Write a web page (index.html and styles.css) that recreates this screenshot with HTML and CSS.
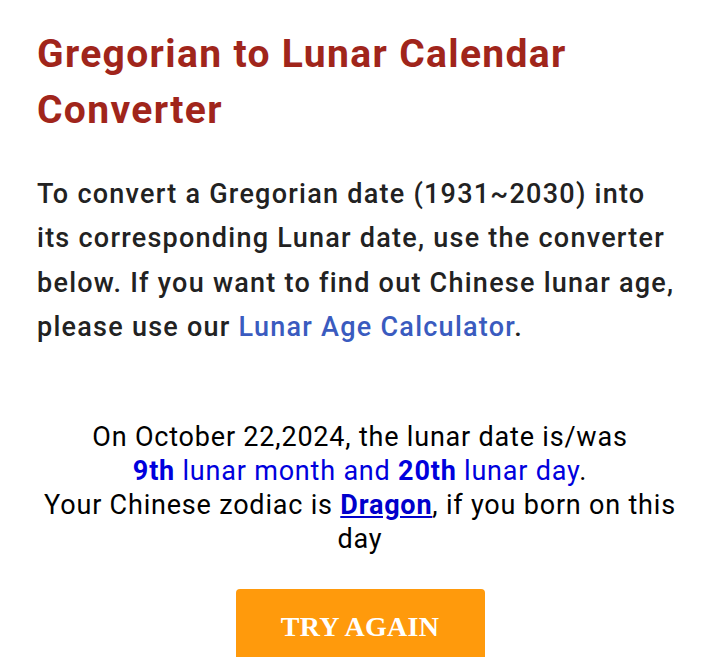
FILE: index.html
```html
<html>
<head>
    <title>Gregorian to Lunar Calendar Converter</title>
    <meta charset="UTF-8">
    <meta name="viewport" content="initial-scale=1,user-scalable=no">
<link rel="stylesheet" href="styles.css">
</head>

<body>

    <div id="page_container">

        <h1 id="page_title">Gregorian to Lunar Calendar Converter</h1>

        <p id="intro_text">
            To convert a Gregorian date (1931~2030) into its corresponding Lunar date, use the converter below. If you want to find out Chinese lunar age, please use our <a href="#" class="intro_link">Lunar Age Calculator</a>.
        </p>

        <div id="result_container">
            On October 22,2024, the lunar date is/was<br>
            <span class="lunar_value"><b>9th</b> lunar month and <b>20th</b> lunar day</span>.<br>
            Your Chinese zodiac is <a href="#" class="zodiac_link">Dragon</a>, if you born on this day
        </div>

        <div id="try_again_container">
            <button type="button" id="try_again_btn">TRY AGAIN</button>
        </div>

    </div>

</body>
</html>
```

FILE: styles.css
```css
body{
    margin: 0px;
    background-color: white;
    font-family: Roboto, "Liberation Sans", Arial, sans-serif;
}

#page_container{
    padding: 0px 37px;
}

#page_title{
    color: #a0251b;
    font-size: 39px;
    font-weight: 700;
    letter-spacing: 1.35px;
    line-height: 56px;
    margin: 26px 0px 0px 0px;
}

#intro_text{
    color: #222222;
    font-size: 27px;
    font-weight: 500;
    letter-spacing: 1.25px;
    line-height: 44.5px;
    margin: 33.5px 0px 0px 0px;
}

.intro_link{
    color: #3a5bbf;
    text-decoration: none;
}

#result_container{
    text-align: center;
    color: black;
    font-size: 27px;
    letter-spacing: 0.8px;
    line-height: 34px;
    margin-top: 70px;
    padding: 0px 4px;
}

.lunar_value{
    color: #0000dd;
}

.zodiac_link{
    color: #0000cc;
    font-weight: 700;
    text-decoration: underline;
}

#try_again_container{
    display: flex;
    justify-content: center;
    margin-top: 33.5px;
}

#try_again_btn{
    width: 249px;
    height: 90px;
    padding: 22px 0px 0px 0px;
    display: flex;
    justify-content: center;
    align-items: flex-start;
    font-family: "Liberation Serif", "Times New Roman", serif;
    font-size: 28px;
    font-weight: 700;
    letter-spacing: 0.3px;
    color: white;
    background-color: #ff9a0c;
    border: none;
    border-radius: 4px;
    outline: none;
}
```
